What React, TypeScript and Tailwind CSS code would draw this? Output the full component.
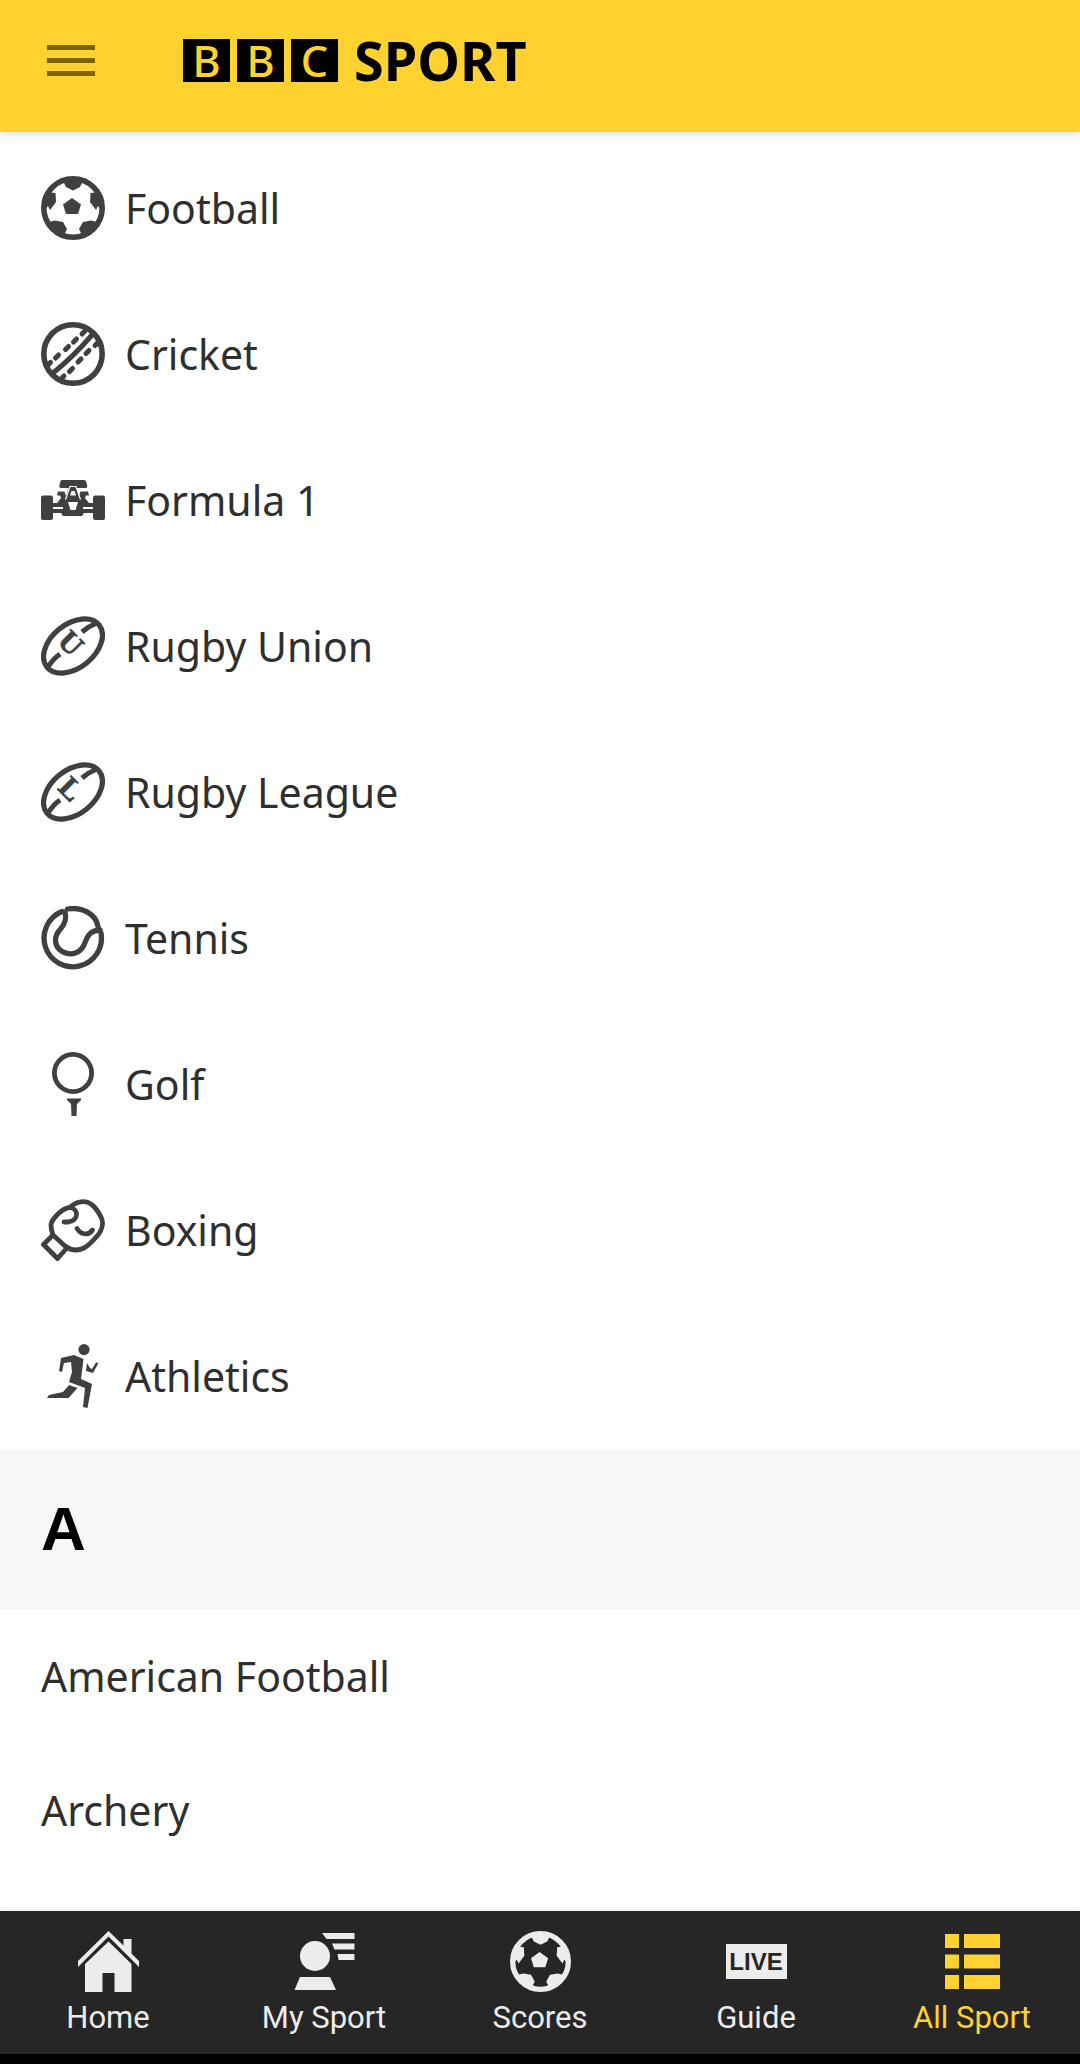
import type { ReactNode } from "react";

type Sport = {
  name: string;
  icon: ReactNode;
};

const topSports: Sport[] = [
  { name: "Football", icon: <FootballIcon className="size-16" /> },
  { name: "Cricket", icon: <CricketIcon /> },
  { name: "Formula 1", icon: <FormulaOneIcon /> },
  { name: "Rugby Union", icon: <RugbyIcon letter="U" /> },
  { name: "Rugby League", icon: <RugbyIcon letter="L" /> },
  { name: "Tennis", icon: <TennisIcon /> },
  { name: "Golf", icon: <GolfIcon /> },
  { name: "Boxing", icon: <BoxingIcon /> },
  { name: "Athletics", icon: <AthleticsIcon /> },
];

const sections = [{ letter: "A", sports: ["American Football", "Archery"] }];

const tabs = [
  { name: "Home", icon: <HomeIcon /> },
  { name: "My Sport", icon: <MySportIcon /> },
  { name: "Scores", icon: <FootballIcon className="size-[61px]" /> },
  { name: "Guide", icon: <LiveIcon /> },
  { name: "All Sport", icon: <ListIcon />, active: true },
];

export default function App() {
  return (
    <div className="flex min-h-screen flex-col bg-white font-['Noto_Sans',sans-serif] text-[#2f2f2f]">
      <Header />

      <main className="flex-1">
        <ul className="pt-[3px]">
          {topSports.map((sport) => (
            <li key={sport.name}>
              <a href="#" className="flex items-center gap-5 px-[41px] py-[41px] text-[41px] leading-[54px]">
                <span className="text-[#404040]">{sport.icon}</span>
                {sport.name}
              </a>
            </li>
          ))}
        </ul>

        {sections.map((section) => (
          <section key={section.letter}>
            <h2 className="bg-[#f7f7f5] px-[41px] py-12 font-['Liberation_Sans',sans-serif] text-[62px] leading-[64px] font-bold text-black">
              {section.letter}
            </h2>
            <ul>
              {section.sports.map((name) => (
                <li key={name}>
                  <a href="#" className="block px-[41px] py-10 text-[41px] leading-[54px]">
                    {name}
                  </a>
                </li>
              ))}
            </ul>
          </section>
        ))}
      </main>

      <TabBar />
    </div>
  );
}

function Header() {
  return (
    <header className="flex h-[132px] items-center bg-[#ffd230] px-[47px] pb-3 shadow-[0_2px_8px_rgba(0,0,0,0.15)]">
      <button type="button" aria-label="Open menu" className="flex w-12 flex-col gap-2">
        <span className="h-[5px] bg-[#7d6400]" />
        <span className="h-[5px] bg-[#7d6400]" />
        <span className="h-[5px] bg-[#7d6400]" />
      </button>

      {/* Logo */}
      <a href="#" className="ml-[88px] flex items-center text-black">
        <span className="flex gap-[7px] text-[43px] leading-[43px] font-medium text-[#ffd230]">
          <span className="w-[47px] bg-black text-center">B</span>
          <span className="w-[47px] bg-black text-center">B</span>
          <span className="w-[47px] bg-black text-center">C</span>
        </span>
        <span className="ml-4 text-[54px] leading-[43px] font-bold">SPORT</span>
      </a>
    </header>
  );
}

function TabBar() {
  return (
    <nav className="grid grid-cols-5 border-b-10 border-black bg-[#262626] pt-5 pb-[18px] shadow-[0_-2px_8px_rgba(0,0,0,0.08)]">
      {tabs.map((tab) => (
        <a
          key={tab.name}
          href="#"
          aria-current={tab.active ? "page" : undefined}
          className={`flex flex-col items-center gap-2 font-['Roboto',sans-serif] text-[31px] leading-9 ${
            tab.active ? "text-[#ffd230]" : "text-[#ececec]"
          }`}
        >
          {tab.icon}
          {tab.name}
        </a>
      ))}
    </nav>
  );
}

function FootballIcon({ className }: { className: string }) {
  return (
    <svg className={className} viewBox="0 0 64 64" fill="currentColor">
      <circle cx="32" cy="32" r="29.2" fill="none" stroke="currentColor" strokeWidth="5.6" />
      <path d="M31 22l9 6.500-3 9.500H25l-3-9.500z" />
      <path d="M23 4V7l2 4 7 3.500 7-3.500 2-4V4z" />
      <path d="M4 34V22L10 16.500l4.500.5.500 9-6 8-2-4z" />
      <path d="M60 34V22L54 16.500l-4.500.5-.5 9 6 8 2-4z" />
      <path d="M8 46l6-1.500 8 1.500 4 7-2 4 2 2-6 1z" />
      <path d="M56 46l-6-1.500-8 1.500-4 7 2 4-2 2 6 1z" />
    </svg>
  );
}

function CricketIcon() {
  return (
    <svg className="size-16" viewBox="0 0 64 64" fill="none" stroke="currentColor">
      <circle cx="32" cy="32" r="29.2" strokeWidth="5.6" />
      <path d="M12 51C27 39 39 27 51 13" strokeWidth="5" />
      <path
        d="M7 43l2.500-2.500M14.500 36l3-3M24.500 27.500l3-3M32.500 20l3-3M41 12l3-3"
        strokeWidth="5"
        strokeLinecap="round"
      />
      <path
        d="M21 56l2-2M28.500 49.500l3-3M37 40l3-3M45 31.500l3-3M54 23.500l2.500-2.500"
        strokeWidth="5"
        strokeLinecap="round"
      />
    </svg>
  );
}

function FormulaOneIcon() {
  return (
    <svg className="size-16" viewBox="0 0 64 64" fill="currentColor">
      <rect x="0" y="27.5" width="12" height="24.5" rx="2" />
      <rect x="52" y="27.5" width="12" height="24.5" rx="2" />
      <path d="M21 12h22q2 0 2.300 2l1 4q.3 2-1.700 2H20q-2 0-1.700-2l1-4q.2-2 1.700-2z" />
      <path d="M28 19h7l3 9 1.500-4.500H47l1 4h-3l-1 2.500 4 5h4v4H42v2h10v4H43l-2 3H22l-2-3h-8v-4h10v-2H12v-4h4l4-5-1-2.500h-3l1-4h6.500L25 28z" />
      {/* Nose cone edges and air intake */}
      <path d="M24.500 31.500l4.500-13h6l4.500 13" fill="none" stroke="white" strokeWidth="1.2" />
      <path d="M30.500 23h3l1.500 4.500h-6z" fill="white" />
      <path d="M27 34h10l-2.500 8h-5z" fill="white" />
    </svg>
  );
}

function RugbyIcon({ letter }: { letter: string }) {
  return (
    <svg className="size-16" viewBox="0 0 64 64" fill="none" stroke="currentColor">
      <ellipse cx="32" cy="32" rx="33.5" ry="21.8" strokeWidth="5.2" transform="rotate(-39 32 32)" />
      <path d="M7 53q5-8 12-13M41 18q7-6 15-9" strokeWidth="5" />
      <text
        x="0"
        y="10"
        textAnchor="middle"
        transform="translate(30 29) rotate(45)"
        fill="currentColor"
        strokeWidth="0.8"
        className="font-['Liberation_Serif',serif] text-[30px] font-bold"
      >
        {letter}
      </text>
    </svg>
  );
}

function TennisIcon() {
  return (
    <svg className="size-16" viewBox="0 0 64 64" fill="none" stroke="currentColor" strokeWidth="5.3" strokeLinecap="round">
      <path d="M26.500 3C41 .5 55 8 57 20.500" />
      <path d="M21 5.500A28.700 28.700 0 1 0 60 27" />
      <path d="M24 6C26 13 24 18 19.500 23C12 31 13 41 22 46C31 50 39 47 43 39C46 32 47 25 59 24" />
    </svg>
  );
}

function GolfIcon() {
  return (
    <svg className="size-16" viewBox="0 0 64 64">
      <circle cx="32" cy="21" r="18.6" fill="none" stroke="currentColor" strokeWidth="4.8" />
      <path d="M26 46.500h14V48l-4 4-.5 12h-5L30 52l-4-4z" fill="currentColor" />
    </svg>
  );
}

function BoxingIcon() {
  return (
    <svg
      className="size-16"
      viewBox="0 0 64 64"
      fill="none"
      stroke="currentColor"
      strokeWidth="4.8"
      strokeLinecap="round"
      strokeLinejoin="round"
    >
      <path d="M12 37C8 26 10 23 17 16C21 12 25 10 29 9.500C35 3 45 2 50 6C54 9 58 15 60 19C63 25 61 32 57 37C51 44 47 48 43 50C35 54 28 51 24 48Z" />
      <path d="M29 9.500C38 11 38 23 27 24H23" />
      <path d="M36 30.500C41 38 48 37 51.500 32" />
      <path d="M11 38L2.500 46.500L16.500 60.500L25 51" />
    </svg>
  );
}

function AthleticsIcon() {
  return (
    <svg className="size-16" viewBox="0 0 64 64" fill="currentColor">
      <circle cx="43" cy="5.6" r="5.6" />
      <path d="M20 14l13-3 9.500 4L40 35l11 5-4.500 24-4.500-1 2-19-16-6 3-10-1-10-7 1-2 9-3-1z" />
      <path d="M28 41l8.500 3-9 10H6l2-3 14-3z" />
      <path d="M46 19l3 5 2 1 4-6.500 2.500.5L52 29l-7-2z" />
    </svg>
  );
}

function HomeIcon() {
  return (
    <svg className="size-[61px]" viewBox="0 0 61 61" fill="currentColor">
      <path d="M30.500 0l15 14.500V8h8v14.500L61 30v6L30.500 5.500 0 36v-6z" />
      <path d="M30.500 10.500l23 22.500v28h-17V42h-12v19H7V33z" />
    </svg>
  );
}

function MySportIcon() {
  return (
    <svg className="size-[61px]" viewBox="0 0 61 61" fill="currentColor">
      <circle cx="21" cy="25" r="15" />
      <path d="M6 46h30l6 13H.5z" />
      <path d="M28 2h32.500v6h-28zM38 12.500h22.500v6h-20zM43.500 23h17v6h-16z" />
    </svg>
  );
}

function LiveIcon() {
  return (
    <span className="flex h-[61px] items-center">
      <span className="w-[61px] bg-[#ececec] text-center font-['Liberation_Sans',sans-serif] text-2xl leading-[35px] font-bold text-[#262626]">
        LIVE
      </span>
    </span>
  );
}

function ListIcon() {
  return (
    <svg className="size-[61px]" viewBox="0 0 61 61" fill="currentColor">
      <path d="M3 3h14v14H3zM22 3h36v14H22zM3 23.500h14v14H3zM22 23.500h36v14H22zM3 44h14v14H3zM22 44h36v14H22z" />
    </svg>
  );
}
